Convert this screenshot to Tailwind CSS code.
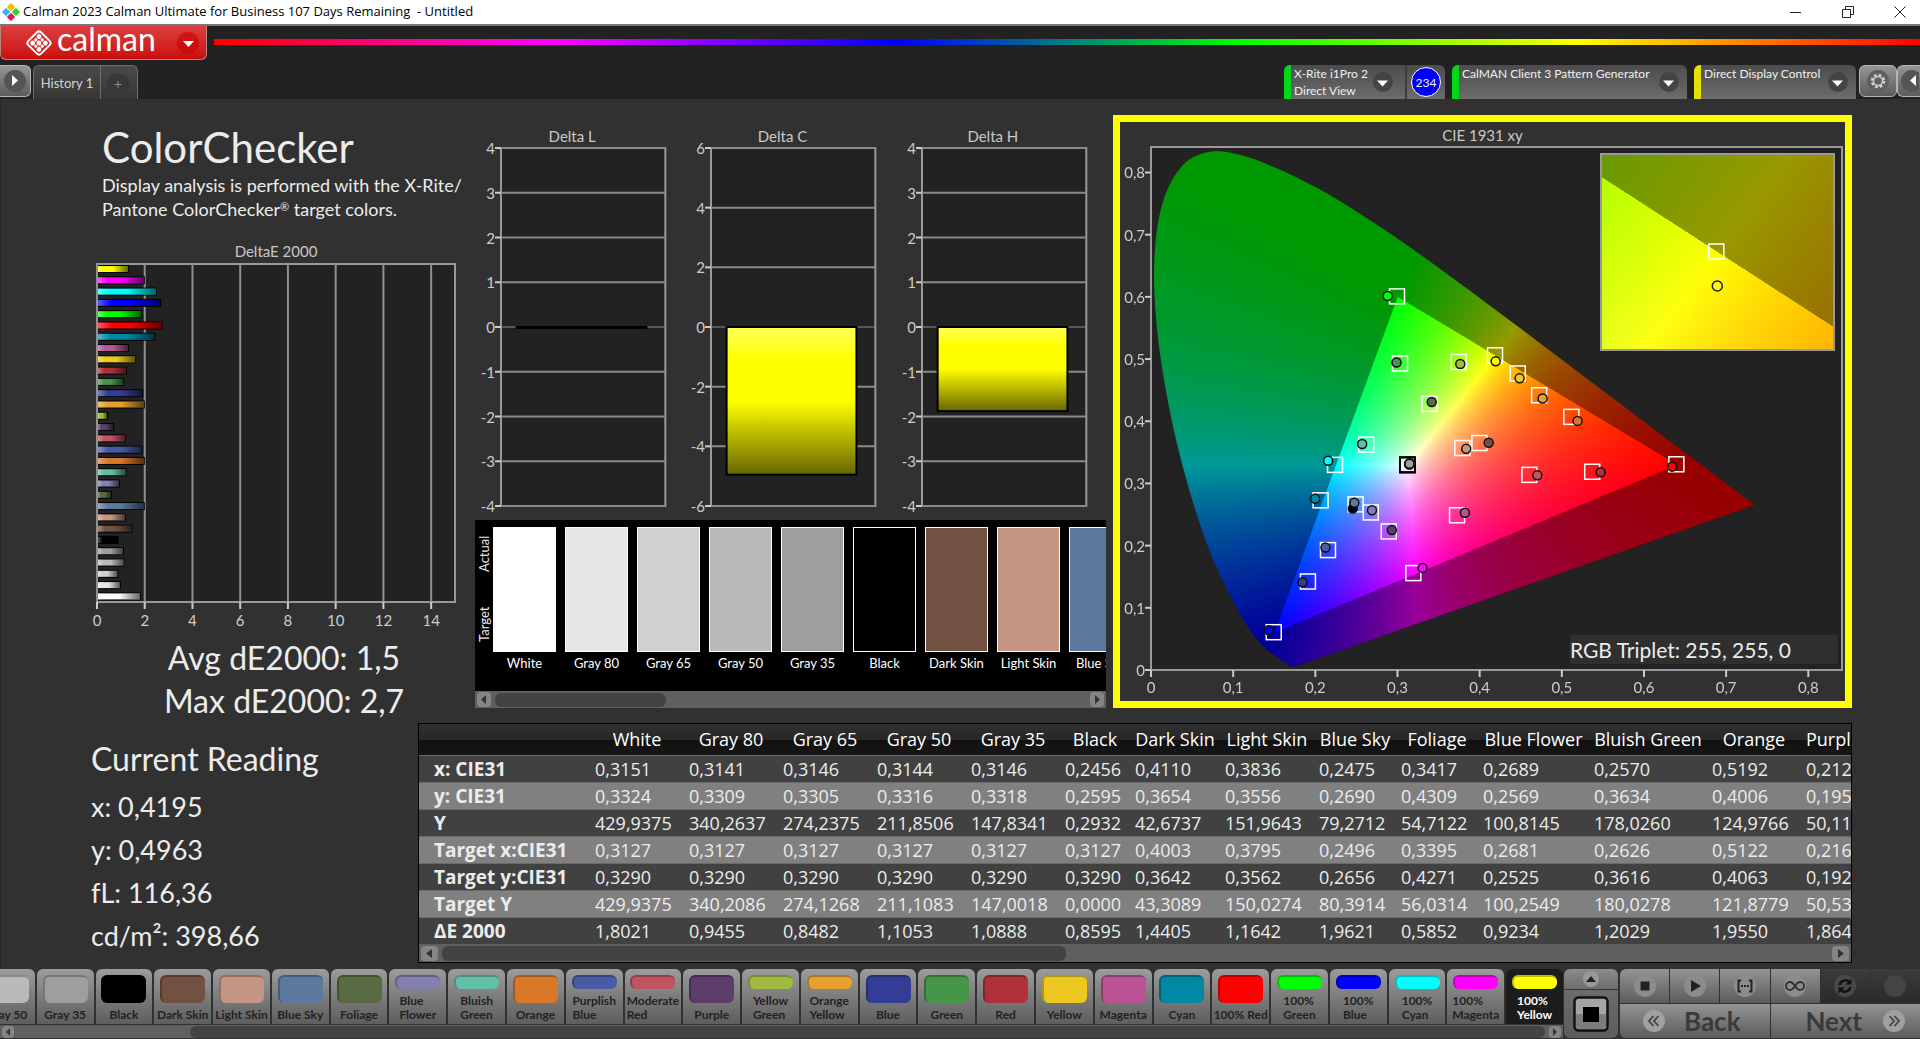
<!DOCTYPE html>
<html lang="en">

<head>
    <meta charset="UTF-8">
    <meta name="viewport" content="width=device-width, initial-scale=1.0">
    <title>Calman 2023</title>
    <script src="https://cdn.jsdelivr.net/npm/@tailwindcss/browser@4"></script>
</head>

<body class="flex min-h-screen flex-col overflow-hidden bg-[#222222] font-['Lato',sans-serif] text-[#ececec]">

    <!-- Title bar -->
    <header class="flex h-[26px] items-center border-b-2 border-[#777777] bg-white px-[2px] text-black">
        <svg class="h-[18px] w-[18px]" viewBox="0 0 18 18">
            <g transform="rotate(45 9 9)">
                <rect x="2.5" y="2.5" width="6" height="6" rx="1" fill="#f2c200" />
                <rect x="9.5" y="2.5" width="6" height="6" rx="1" fill="#2fd62f" />
                <rect x="2.5" y="9.5" width="6" height="6" rx="1" fill="#35b6ef" />
                <rect x="9.5" y="9.5" width="6" height="6" rx="1" fill="#e3194d" />
            </g>
        </svg>
        <h1 class="ml-[3px] flex-1 font-['Open_Sans',sans-serif] text-[13px] whitespace-pre">Calman 2023 Calman Ultimate for Business 107 Days Remaining  - Untitled</h1>
        <div class="flex gap-10 pr-3">
            <button aria-label="Minimize"><svg class="h-3 w-3" viewBox="0 0 12 12" fill="none" stroke="#222"><path d="M0 6.5h11" /></svg></button>
            <button aria-label="Restore"><svg class="h-3 w-3" viewBox="0 0 12 12" fill="none" stroke="#222"><path d="M.5 3.5h8v8h-8zM3.500 3.500v-3h8v8h-3" /></svg></button>
            <button aria-label="Close"><svg class="h-3 w-3" viewBox="0 0 12 12" fill="none" stroke="#222"><path d="M.5.5l11 11M11.500.5l-11 11" /></svg></button>
        </div>
    </header>

    <!-- Logo and rainbow line -->
    <div class="flex h-[34px] items-start">
        <button class="flex h-[34px] w-[207px] items-center rounded-b-md border border-t-0 border-[#b98585] bg-linear-to-b from-[#dd3c3c] to-[#c90c0c] pr-[6px] pl-6 text-white">
            <svg class="h-7 w-7" viewBox="0 0 28 28">
                <g transform="rotate(45 14 14)">
                    <rect x="5" y="5" width="18" height="18" rx="3" fill="none" stroke="#fff" stroke-width="2" />
                    <g fill="#fff">
                        <circle cx="9.500" cy="9.500" r="2.400" /><circle cx="14" cy="9.500" r="1.600" /><circle cx="18.500" cy="9.500" r="2.400" />
                        <circle cx="9.500" cy="14" r="1.600" /><circle cx="14" cy="14" r="2.400" /><circle cx="18.500" cy="14" r="1.600" />
                        <circle cx="9.500" cy="18.500" r="2.400" /><circle cx="14" cy="18.500" r="1.600" /><circle cx="18.500" cy="18.500" r="2.400" />
                    </g>
                </g>
            </svg>
            <span class="ml-1 flex-1 pb-2 text-left text-[32px] leading-6 font-normal">calman</span>
            <svg class="h-6 w-6" viewBox="0 0 24 24"><circle cx="12" cy="12" r="11" fill="#c00" fill-opacity=".6" /><path d="M7 10h11l-5.500 6z" fill="#fff" /></svg>
        </button>
        <div class="mt-[13px] ml-[7px] h-[6px] flex-1 bg-[linear-gradient(90deg,#f00,#f0f_20%,#00f_40%,#0f0_60%,#ff0_80%,#f00)]"></div>
    </div>

    <!-- History tab and devices -->
    <nav class="flex h-[39px] items-start pt-[5px]">
        <button class="flex h-8 w-[31px] items-center justify-center rounded-r-md border border-l-0 border-[#b4b4b4] bg-linear-to-b from-[#969696] to-[#5c5c5c]" aria-label="Expand">
            <svg class="h-6 w-6" viewBox="0 0 24 24"><circle cx="12" cy="12" r="11" fill="#555" /><path d="M9 6v11l6-5.500z" fill="#fff" /></svg>
        </button>
        <button class="ml-[2px] h-[34px] w-[67px] rounded-tl-md border border-r-0 border-b-0 border-[#6e6e6e] bg-linear-to-b from-[#4a4a4a] to-[#363636] pt-[2px] text-[13px] text-[#d4d4d4]">History 1</button>
        <button class="flex h-[34px] w-[38px] items-center justify-center rounded-tr-md border border-b-0 border-[#6e6e6e] bg-linear-to-b from-[#4a4a4a] to-[#363636]" aria-label="Add history">
            <svg class="h-6 w-6" viewBox="0 0 24 24"><circle cx="11" cy="13" r="11" fill="#383838" /><path d="M11 10v7M7.500 13.500h7" stroke="#8c8c8c" /></svg>
        </button>

        <div class="ml-auto flex gap-[7px] text-[12px] leading-[17px] text-[#f0f0f0]">
            <div class="flex h-[34px] w-[161px] overflow-hidden rounded-t-md bg-linear-to-b from-[#4c4c4c] to-[#6c6c6c]">
                <span class="w-[7px] shrink-0 bg-[#00d818]"></span>
                <button class="flex flex-1 items-center text-left whitespace-nowrap">
                    <span class="ml-[3px] flex-1">X-Rite i1Pro 2<br>Direct View</span>
                    <svg class="mr-[10px] h-6 w-6 shrink-0" viewBox="0 0 24 24"><circle cx="12" cy="12" r="10" fill="#444" /><path d="M6 10.500h11l-5.500 6z" fill="#fff" /></svg>
                </button>
                <span class="flex w-[40px] shrink-0 items-center justify-center border-l-2 border-[#3c3c3c]">
                    <span class="flex h-[30px] w-[30px] items-center justify-center rounded-full border border-white bg-[#0000fa]">234</span>
                </span>
            </div>
            <div class="flex h-[34px] w-[235px] overflow-hidden rounded-t-md bg-linear-to-b from-[#4c4c4c] to-[#6c6c6c]">
                <span class="w-[7px] shrink-0 bg-[#00d818]"></span>
                <button class="flex flex-1 items-center text-left whitespace-nowrap">
                    <span class="ml-[3px] flex-1 self-start">CalMAN Client 3 Pattern Generator</span>
                    <svg class="mr-[6px] h-6 w-6 shrink-0" viewBox="0 0 24 24"><circle cx="12" cy="12" r="10" fill="#444" /><path d="M6 10.500h11l-5.500 6z" fill="#fff" /></svg>
                </button>
            </div>
            <div class="flex h-[34px] w-[162px] overflow-hidden rounded-t-md bg-linear-to-b from-[#4c4c4c] to-[#6c6c6c]">
                <span class="w-[7px] shrink-0 bg-[#e6e000]"></span>
                <button class="flex flex-1 items-center text-left whitespace-nowrap">
                    <span class="ml-[3px] flex-1 self-start">Direct Display Control</span>
                    <svg class="mr-[6px] h-6 w-6 shrink-0" viewBox="0 0 24 24"><circle cx="12" cy="12" r="10" fill="#444" /><path d="M6 10.500h11l-5.500 6z" fill="#fff" /></svg>
                </button>
            </div>
        </div>
        <button class="ml-[3px] flex h-8 w-[38px] items-center justify-center rounded-md border border-[#b4b4b4] bg-linear-to-b from-[#969696] to-[#5c5c5c]" aria-label="Settings">
            <svg class="h-6 w-6" viewBox="0 0 24 24">
                <circle cx="12" cy="12" r="11" fill="#606060" />
                <circle cx="12" cy="12" r="6" fill="none" stroke="#d0d0d0" stroke-width="2.500" stroke-dasharray="2.700 2.012" />
                <circle cx="12" cy="12" r="4.500" fill="none" stroke="#d0d0d0" stroke-width="1.500" />
            </svg>
        </button>
        <button class="flex h-8 w-[23px] items-center justify-center rounded-l-md border border-r-0 border-[#b4b4b4] bg-linear-to-b from-[#969696] to-[#5c5c5c]" aria-label="Collapse">
            <svg class="h-6 w-5" viewBox="0 0 20 24"><circle cx="13" cy="12" r="11" fill="#555" /><path d="M17 6v11l-6-5.500z" fill="#fff" /></svg>
        </button>
    </nav>

    <main class="flex flex-1 flex-col border-l border-[#262626] bg-[#313131]">
        <section class="grid grid-cols-[minmax(0,474fr)_minmax(0,631fr)_minmax(0,746fr)] pr-[68px]">

            <!-- DeltaE 2000 -->
            <div class="pr-[20px] pl-[96px]">
                <h2 class="mt-[22px] ml-[5px] text-[42px] leading-[52px]">ColorChecker</h2>
                <p class="ml-[5px] text-[18px] leading-[24px] whitespace-nowrap">Display analysis is performed with the X-Rite/<br>Pantone ColorChecker<sup class="text-[11px]">®</sup> target colors.</p>
                <h3 class="mt-[17px] text-center text-[15px] leading-[26px] text-[#c8c8c8]">DeltaE 2000</h3>
                <svg id="deltaE" class="h-[338px] w-full overflow-visible"></svg>
                <p class="mt-[34px] pl-4 text-center text-[32px] leading-[43px]">Avg dE2000: 1,5<br>Max dE2000: 2,7</p>
            </div>

            <!-- Delta charts and swatches -->
            <div class="pt-[25px]">
                <div class="grid grid-cols-3">
                    <div>
                        <h3 class="pr-4 text-center text-[15px] leading-6 text-[#c8c8c8]">Delta L</h3>
                        <div class="pr-[20px] pl-[26px]"><svg id="deltaL" class="h-[358px] w-full overflow-visible"></svg></div>
                    </div>
                    <div>
                        <h3 class="pr-4 text-center text-[15px] leading-6 text-[#c8c8c8]">Delta C</h3>
                        <div class="pr-[20px] pl-[26px]"><svg id="deltaC" class="h-[358px] w-full overflow-visible"></svg></div>
                    </div>
                    <div>
                        <h3 class="pr-4 text-center text-[15px] leading-6 text-[#c8c8c8]">Delta H</h3>
                        <div class="pr-[20px] pl-[26px]"><svg id="deltaH" class="h-[358px] w-full overflow-visible"></svg></div>
                    </div>
                </div>
                <div class="mt-[14px] bg-black">
                    <div class="flex h-[171px] overflow-hidden pt-[7px]">
                        <div class="flex h-[125px] w-[18px] shrink-0 rotate-180 justify-between pt-[10px] pr-px pb-[9px] text-[13px] leading-[17px] [writing-mode:vertical-rl]">
                            <span>Target</span><span>Actual</span>
                        </div>
                        <div id="swatches" class="flex gap-[9px]"></div>
                    </div>
                    <div class="flex h-[17px] items-center gap-1 bg-[#606060] px-[2px]">
                        <button class="h-[15px] w-[14px] rounded-sm bg-[#858585]" aria-label="Scroll left"><svg viewBox="0 0 14 15"><path d="M9 3v9L4 7.500z" fill="#333" /></svg></button>
                        <div class="flex-1"><div class="h-[14px] w-[29%] rounded-md bg-[#434343]"></div></div>
                        <button class="h-[15px] w-[14px] rounded-sm bg-[#858585]" aria-label="Scroll right"><svg viewBox="0 0 14 15"><path d="M5 3v9l5-4.500z" fill="#333" /></svg></button>
                    </div>
                </div>
            </div>

            <!-- CIE 1931 -->
            <div class="pt-4 pl-[7px]">
                <div class="border-[7px] border-[#ffff00] pr-[3px] pl-[31px]">
                    <h3 class="pt-[2px] pr-[28px] text-center text-[15px] leading-[23px] text-[#c8c8c8]">CIE 1931 xy</h3>
                    <div class="relative mb-[31px] h-[523px] bg-[#222222]">
                        <canvas id="cie" width="1382" height="1046" class="block h-full w-full"></canvas>
                        <svg id="ciePoints" class="absolute inset-0 h-full w-full overflow-visible"></svg>
                        <div class="absolute top-[6px] right-[7px] h-[198px] w-[34%] border-2 border-[#999999]">
                            <canvas id="cieZoom" width="466" height="396" class="block h-full w-full"></canvas>
                            <svg class="absolute inset-0 h-full w-full">
                                <svg x="49.500%" y="50%" class="overflow-visible">
                                    <rect x="-7.500" y="-8" width="15" height="15" fill="none" stroke="#fff" stroke-width="1.500" />
                                    <circle cx="1" cy="34" r="5" fill="#ffff00" stroke="#222" stroke-width="1.500" />
                                </svg>
                            </svg>
                        </div>
                        <div class="absolute right-[4px] bottom-[6px] h-[29px] w-[268px] bg-[#2f2f2f] text-[21px] leading-[29px]">RGB Triplet: 255, 255, 0</div>
                    </div>
                </div>
            </div>
        </section>

        <section class="mt-px flex pr-[68px] pl-[90px]">
            <!-- Current reading -->
            <div class="w-[327px] shrink-0 pt-[14px]">
                <h2 class="text-[32px] leading-[44px]">Current Reading</h2>
                <ul class="pt-1 text-[27px] leading-[43px]">
                    <li>x: 0,4195</li>
                    <li>y: 0,4963</li>
                    <li>fL: 116,36</li>
                    <li>cd/m²: 398,66</li>
                </ul>
            </div>

            <!-- Measurements -->
            <div class="min-w-0 flex-1 self-start border border-black font-['Open_Sans',sans-serif]">
                <div class="overflow-hidden">
                    <table class="w-[1480px] table-fixed text-left text-[18px] leading-[26px] whitespace-nowrap">
                        <thead class="bg-[linear-gradient(#303030,#272727_50%,#111_51%,#161616)]">
                            <tr id="head" class="h-[31px] text-white"></tr>
                        </thead>
                        <tbody id="rows"></tbody>
                    </table>
                </div>
                <div class="flex h-[18px] items-center gap-1 bg-[#606060] px-[2px]">
                    <button class="h-[15px] w-[17px] rounded-sm bg-[#858585]" aria-label="Scroll left"><svg viewBox="0 0 17 15"><path d="M11 3v9L5 7.500z" fill="#333" /></svg></button>
                    <div class="flex-1"><div class="h-[15px] w-[45%] rounded-md bg-[#434343]"></div></div>
                    <button class="h-[15px] w-[17px] rounded-sm bg-[#858585]" aria-label="Scroll right"><svg viewBox="0 0 17 15"><path d="M6 3v9l6-4.500z" fill="#333" /></svg></button>
                </div>
            </div>
        </section>
    </main>

    <!-- Patches and transport -->
    <footer class="flex h-[72px] gap-px overflow-hidden bg-[#313131] pt-[2px] pb-px">
        <div class="min-w-0 flex-1 overflow-hidden">
            <div id="patches" class="-ml-[22px] grid h-[55px] grid-cols-[repeat(27,minmax(0,1fr))] gap-[2px]"></div>
            <div class="mt-px flex h-[13px] items-center bg-[#606060] px-[2px]">
                <button class="h-[12px] w-[12px] rounded-sm bg-[#858585]" aria-label="Scroll left"><svg viewBox="0 0 12 12"><path d="M8 2v8L4 6z" fill="#333" /></svg></button>
                <div class="flex flex-1 justify-end pr-[4px]"><div class="h-[12px] w-[88.500%] rounded-md bg-[#434343]"></div></div>
                <button class="h-[12px] w-[12px] rounded-sm bg-[#858585]" aria-label="Scroll right"><svg viewBox="0 0 12 12"><path d="M4 2v8l4-4z" fill="#333" /></svg></button>
            </div>
        </div>
        <div class="flex w-[54px] flex-col">
            <button class="flex h-[21px] items-center justify-center rounded-t-md border-b border-[#333] bg-linear-to-b from-[#8c8c8c] to-[#6c6c6c]" aria-label="Previous patch">
                <svg class="h-4 w-4" viewBox="0 0 16 16"><circle cx="8" cy="8" r="8" fill="#999" /><path d="M3 11h10L8 5z" fill="#222" /></svg>
            </button>
            <button class="flex flex-1 items-center justify-center rounded-b-md bg-linear-to-b from-[#6c6c6c] to-[#5c5c5c]" aria-label="Patch window">
                <svg class="h-9 w-9" viewBox="0 0 36 36"><rect x="1.500" y="1.500" width="33" height="33" rx="4" fill="#a5a5a5" stroke="#111" stroke-width="2.500" /><path d="M3 18h30v12a3 3 0 0 1-3 3H6a3 3 0 0 1-3-3z" fill="#7d7d7d" /><rect x="10" y="11" width="16" height="15" fill="#000" /></svg>
            </button>
        </div>
        <div class="flex w-[301px] flex-col gap-px pl-px">
            <div class="grid h-[34px] grid-cols-6 gap-px">
                <button class="flex items-center justify-center rounded-tl-md bg-linear-to-b from-[#949494] to-[#5c5c5c]" aria-label="Stop"><svg class="h-6 w-6" viewBox="0 0 24 24"><circle cx="12" cy="12" r="11" fill="#8c8c8c" /><path d="M7.500 7.500h9v9h-9z" fill="#222" /></svg></button>
                <button class="flex items-center justify-center bg-linear-to-b from-[#949494] to-[#5c5c5c]" aria-label="Play"><svg class="h-6 w-6" viewBox="0 0 24 24"><circle cx="12" cy="12" r="11" fill="#8c8c8c" /><path d="M8 6v12l10-6z" fill="#222" /></svg></button>
                <button class="flex items-center justify-center bg-linear-to-b from-[#949494] to-[#5c5c5c]" aria-label="Read series"><svg class="h-6 w-6" viewBox="0 0 24 24"><circle cx="12" cy="12" r="11" fill="#8c8c8c" /><path d="M8 6.500H5.500v11H8M16 6.500h2.500v11H16M8 12h2m1 0h2m1 0h2" fill="none" stroke="#222" stroke-width="2" /></svg></button>
                <button class="flex items-center justify-center bg-linear-to-b from-[#949494] to-[#5c5c5c]" aria-label="Continuous"><svg class="h-6 w-6" viewBox="0 0 24 24"><circle cx="12" cy="12" r="11" fill="#8c8c8c" /><path d="M12 12c-2-3-3.500-4-5-4a4 4 0 0 0 0 8c1.500 0 3-1 5-4s3.500-4 5-4a4 4 0 0 1 0 8c-1.500 0-3-1-5-4z" fill="none" stroke="#333" stroke-width="2" /></svg></button>
                <button class="flex items-center justify-center bg-linear-to-b from-[#3c3c3c] to-[#2a2a2a]" aria-label="Refresh"><svg class="h-6 w-6" viewBox="0 0 24 24"><circle cx="12" cy="12" r="11" fill="#484848" /><path d="M6.500 11a6 6 0 0 1 10-3M17.500 13a6 6 0 0 1-10 3" fill="none" stroke="#111" stroke-width="2.500" /><path d="M18.500 4.500v6h-6zM5.500 19.500v-6h6z" fill="#111" /></svg></button>
                <button class="flex items-center justify-center bg-linear-to-b from-[#3c3c3c] to-[#2a2a2a]" aria-label="Record"><svg class="h-6 w-6" viewBox="0 0 24 24"><circle cx="12" cy="12" r="11" fill="#444" /></svg></button>
            </div>
            <div class="grid flex-1 grid-cols-2 gap-px text-[26px] leading-none font-bold text-[#3a3a3a]">
                <button class="flex items-center rounded-bl-md bg-linear-to-b from-[#949494] to-[#5c5c5c] pl-[22px]">
                    <svg class="mr-[18px] h-6 w-6" viewBox="0 0 24 24"><circle cx="12" cy="12" r="11" fill="#a0a0a0" /><path d="M11.500 7l-4.500 5 4.500 5M16.500 7l-4.500 5 4.500 5" fill="none" stroke="#444" stroke-width="1.800" /></svg>Back
                </button>
                <button class="flex items-center justify-end bg-linear-to-b from-[#949494] to-[#5c5c5c] pr-[14px]">
                    Next<svg class="ml-[20px] h-6 w-6" viewBox="0 0 24 24"><circle cx="12" cy="12" r="11" fill="#a0a0a0" /><path d="M7.500 7l4.500 5-4.500 5M12.500 7l4.500 5-4.500 5" fill="none" stroke="#444" stroke-width="1.800" /></svg>
                </button>
            </div>
        </div>
    </footer>

    <script>
        // name, color, deltaE, target x/y, measured x/y
        const patches = [
            ["White", "#ffffff", 1.80, .3127, .3290, .3151, .3324],
            ["Gray 80", "#e6e6e6", .95, .3127, .3290, .3141, .3309],
            ["Gray 65", "#d0d0d0", .85, .3127, .3290, .3146, .3305],
            ["Gray 50", "#bababa", 1.11, .3127, .3290, .3144, .3316],
            ["Gray 35", "#9e9e9e", 1.09, .3127, .3290, .3146, .3318],
            ["Black", "#000000", .86, .3127, .3290, .2456, .2595],
            ["Dark Skin", "#735142", 1.44, .4003, .3642, .4110, .3654],
            ["Light Skin", "#c49582", 1.16, .3795, .3562, .3836, .3556],
            ["Blue Sky", "#5c7a9e", 1.96, .2496, .2656, .2475, .2690],
            ["Foliage", "#596b42", .59, .3395, .4271, .3417, .4309],
            ["Blue Flower", "#8280b0", .92, .2681, .2525, .2689, .2569],
            ["Bluish Green", "#64bfa9", 1.20, .2626, .3616, .2570, .3634],
            ["Orange", "#d97829", 1.96, .5122, .4063, .5192, .4006],
            ["Purplish Blue", "#4a5ba5", 1.86, .216, .192, .2123, .1968],
            ["Moderate Red", "#c25462", 1.16, .4612, .313, .4702, .313],
            ["Purple", "#5d3d6c", .68, .290, .222, .2931, .225],
            ["Yellow Green", "#a0bc40", .42, .3751, .4945, .3764, .492],
            ["Orange Yellow", "#e6a12e", 1.96, .473, .441, .4766, .4366],
            ["Blue", "#343d96", 1.89, .1916, .1415, .1843, .141],
            ["Green", "#479549", 1.10, .3037, .492, .2988, .4945],
            ["Red", "#b03038", 1.22, .5376, .318, .5473, .318],
            ["Yellow", "#edc722", 1.60, .447, .476, .4486, .469],
            ["Magenta", "#bc5394", 1.29, .3731, .248, .382, .2528],
            ["Cyan", "#0088a5", 2.40, .207, .272, .1998, .2755],
            ["100% Red", "#ff0000", 2.70, .64, .33, .6342, .327],
            ["100% Green", "#00ff00", 1.85, .30, .60, .288, .6015],
            ["100% Blue", "#0000ff", 2.65, .15, .06, .1433, .064],
            ["100% Cyan", "#00ffff", 2.46, .2246, .329, .2156, .3364],
            ["100% Magenta", "#ff00ff", 1.96, .3199, .155, .3305, .1642],
            ["100% Yellow", "#ffff00", 1.29, .4193, .5053, .4195, .4963]
        ];

        // Lit-cylinder shading laid over every bar
        function shade(id, vertical) {
            return `<defs><linearGradient id="${id}" x2="${vertical ? 0 : 1}" y2="${vertical ? 1 : 0}">
                <stop offset="0" stop-color="#fff" stop-opacity=".35" /><stop offset=".22" stop-color="#fff" stop-opacity="0" />
                <stop offset=".5" stop-color="#000" stop-opacity="0" /><stop offset="1" stop-color="#000" stop-opacity=".6" />
            </linearGradient></defs>`;
        }

        function drawDeltaE() {
            let out = shade("shadeE", false) + `<rect width="100%" height="100%" fill="#222222" stroke="#999" stroke-width="2" />`;
            for (let v = 0; v <= 14; v += 2) {
                const x = v / 15 * 100;
                out += `<line x1="${x}%" x2="${x}%" y2="100%" stroke="#909090" stroke-width="2" />
                    <svg x="${x}%" y="100%" class="overflow-visible"><path d="M0 0v7" stroke="#ccc" stroke-width="2" />
                    <text y="24" text-anchor="middle" class="fill-[#cccccc] text-[15px]">${v}</text></svg>`;
            }
            [...patches].reverse().forEach(([name, color, dE], i) => {
                const y = .3 + i * 3.34, w = dE / 15 * 100;
                out += `<rect x="1" y="${y}%" width="${w}%" height="8" fill="#000" />
                    <rect x="1" y="${y + .3}%" width="${w - .3}%" height="6" fill="${color}" />
                    <rect x="1" y="${y + .3}%" width="${w - .3}%" height="6" fill="url(#shadeE)" />`;
            });
            document.getElementById("deltaE").innerHTML = out;
        }

        function drawDelta(id, max, step, value) {
            const at = v => (max - v) / (2 * max) * 100;
            let out = shade(id + "Shade", true) + `<rect width="100%" height="100%" fill="#222222" stroke="#999" stroke-width="2" />`;
            for (let v = max; v >= -max; v -= step) {
                out += `<line x2="100%" y1="${at(v)}%" y2="${at(v)}%" stroke="#8a8a8a" stroke-width="${v ? 2 : 1}" />
                    <svg y="${at(v)}%" class="overflow-visible"><path d="M-6 0h6" stroke="#ccc" stroke-width="2" />
                    <text x="-6" y="6" text-anchor="end" class="fill-[#cccccc] text-[15px]">${v}</text></svg>`;
            }
            const h = at(value) - 50;
            out += `<rect x="9.5%" y="50%" width="79%" height="${h}%" fill="#ffff00" />
                <rect x="9.5%" y="50%" width="79%" height="${h}%" fill="url(#${id}Shade)" stroke="#000" stroke-width="2" />`;
            document.getElementById(id).innerHTML = out;
        }

        const locus = [[.1741, .005], [.1714, .0051], [.1644, .0109], [.1566, .0177], [.144, .0297], [.1355, .0399], [.1241, .0578],
            [.1096, .0868], [.0913, .1327], [.0687, .2007], [.0454, .295], [.0235, .4127], [.0082, .5384], [.0039, .6548],
            [.0139, .7502], [.0389, .812], [.0743, .8338], [.1142, .8262], [.1547, .8059], [.1929, .7816], [.2296, .7543],
            [.3016, .6923], [.3731, .6245], [.4441, .5547], [.5125, .4866], [.5752, .4242], [.627, .3725], [.6658, .334],
            [.6915, .3083], [.719, .2809], [.7347, .2653]];

        // Paint chromaticities; anything outside Rec.709 is dimmed
        function paint(id, x0, y0, x1, y1, masked) {
            const canvas = document.getElementById(id);
            const ctx = canvas.getContext("2d");
            const w = canvas.width, h = canvas.height;
            const img = ctx.createImageData(w, h);
            for (let j = 0; j < h; j++) {
                for (let i = 0; i < w; i++) {
                    const x = x0 + (x1 - x0) * i / w, y = y1 - (y1 - y0) * (j + .5) / h, z = 1 - x - y;
                    const rgb = [3.2406 * x - 1.5372 * y - .4986 * z, -.9689 * x + 1.8758 * y + .0415 * z, .0557 * x - .204 * y + 1.057 * z];
                    const level = Math.min(...rgb) < 0 ? 153 : 255;
                    const top = Math.max(...rgb), k = (j * w + i) * 4;
                    for (let c = 0; c < 3; c++) img.data[k + c] = Math.max(0, rgb[c]) / top * level;
                    img.data[k + 3] = 255;
                }
            }
            ctx.putImageData(img, 0, 0);
            if (!masked) return;

            // Keep only the inside of the spectral locus, smoothed through its points
            const p = locus.map(([x, y]) => [x / x1 * w, (1 - y / y1) * h]);
            ctx.globalCompositeOperation = "destination-in";
            ctx.beginPath();
            ctx.moveTo(...p[0]);
            for (let i = 0; i < p.length - 1; i++) {
                const a = p[Math.max(0, i - 1)], b = p[i], c = p[i + 1], d = p[Math.min(p.length - 1, i + 2)];
                ctx.bezierCurveTo(b[0] + (c[0] - a[0]) / 6, b[1] + (c[1] - a[1]) / 6, c[0] - (d[0] - b[0]) / 6, c[1] - (d[1] - b[1]) / 6, ...c);
            }
            ctx.fill();
        }

        function drawCie() {
            const max = .841;
            const px = x => x / max * 100 + "%", py = y => (1 - y / max) * 100 + "%";
            let out = `<rect width="100%" height="100%" fill="none" stroke="#999" stroke-width="2" />`;
            for (let i = 0; i <= 8; i++) {
                const label = i ? "0," + i : "0";
                out += `<svg x="${px(i / 10)}" y="100%" class="overflow-visible"><path d="M0 0v7" stroke="#ccc" stroke-width="2" />
                    <text y="23" text-anchor="middle" class="fill-[#cccccc] text-[15px]">${label}</text></svg>
                    <svg y="${py(i / 10)}" class="overflow-visible"><path d="M-6 0h6" stroke="#ccc" stroke-width="2" />
                    <text x="-6" y="6" text-anchor="end" class="fill-[#cccccc] text-[15px]">${label}</text></svg>`;
            }
            patches.forEach(([name, color, dE, tx, ty]) => {
                out += `<svg x="${px(tx)}" y="${py(ty)}" class="overflow-visible"><rect x="-8" y="-8" width="15" height="15"
                    fill="none" stroke="${tx === .3127 ? "#000" : "#fff"}" stroke-width="1.500" /></svg>`;
            });
            // black is lowest so that Blue Sky stays visible over it
            [patches[5], ...patches.filter(p => p[0] !== "Black")].forEach(([name, color, dE, tx, ty, x, y]) => {
                out += `<circle cx="${px(x)}" cy="${py(y)}" r="4.500" fill="${color}" stroke="#111" stroke-width="1.500" />`;
            });
            document.getElementById("ciePoints").innerHTML = out;
        }

        // Column widths and values of the measurement table
        const columns = [
            ["White", 94, "0,3151 0,3324 429,9375 0,3127 0,3290 429,9375 1,8021"],
            ["Gray 80", 94, "0,3141 0,3309 340,2637 0,3127 0,3290 340,2086 0,9455"],
            ["Gray 65", 94, "0,3146 0,3305 274,2375 0,3127 0,3290 274,1268 0,8482"],
            ["Gray 50", 94, "0,3144 0,3316 211,8506 0,3127 0,3290 211,1083 1,1053"],
            ["Gray 35", 94, "0,3146 0,3318 147,8341 0,3127 0,3290 147,0018 1,0888"],
            ["Black", 70, "0,2456 0,2595 0,2932 0,3127 0,3290 0,0000 0,8595"],
            ["Dark Skin", 90, "0,4110 0,3654 42,6737 0,4003 0,3642 43,3089 1,4405"],
            ["Light Skin", 94, "0,3836 0,3556 151,9643 0,3795 0,3562 150,0274 1,1642"],
            ["Blue Sky", 82, "0,2475 0,2690 79,2712 0,2496 0,2656 80,3914 1,9621"],
            ["Foliage", 82, "0,3417 0,4309 54,7122 0,3395 0,4271 56,0314 0,5852"],
            ["Blue Flower", 111, "0,2689 0,2569 100,8145 0,2681 0,2525 100,2549 0,9234"],
            ["Bluish Green", 118, "0,2570 0,3634 178,0260 0,2626 0,3616 180,0278 1,2029"],
            ["Orange", 94, "0,5192 0,4006 124,9766 0,5122 0,4063 121,8779 1,9550"],
            ["Purplish Blue", 93, "0,2123 0,1957 50,1124 0,2162 0,1921 50,5310 1,8642"]
        ];
        const labels = ["x: CIE31", "y: CIE31", "Y", "Target x:CIE31", "Target y:CIE31", "Target Y", "ΔE 2000"];

        document.getElementById("head").innerHTML = `<th style="width:176px"></th>` + columns.map(([name, width], i) =>
            `<th scope="col" style="width:${width}px" class="font-normal ${i < 13 ? "pr-[10px] text-center" : "overflow-hidden"}">${name}</th>`).join("");
        document.getElementById("rows").innerHTML = labels.map((label, r) => `
            <tr class="h-[27px] border-t border-[#6a6a6a] ${r % 2 ? "bg-[#808080]" : "bg-[#414141]"}">
                <th scope="row" class="pl-[15px] text-[19px] font-bold">${label}</th>
                ${columns.map(c => `<td>${c[2].split(" ")[r]}</td>`).join("")}
            </tr>`).join("");

        document.getElementById("swatches").innerHTML = patches.slice(0, 9).map(([name, color]) => `
            <div class="w-[63px] shrink-0 text-center text-[13px] leading-[23px] whitespace-nowrap text-white">
                <div class="h-[125px] border border-white" style="background:${color}"></div>${name}
            </div>`).join("");

        document.getElementById("patches").innerHTML = patches.slice(3).map(([name, color]) => {
            const two = name.includes(" ") && !/Gray|Skin|Sky|100% Red/.test(name);
            const on = name === "100% Yellow";
            return `<button class="flex min-w-0 flex-col items-center rounded-t-md pt-[6px] pb-[2px] text-[12px] leading-[14px] font-bold
                ${on ? "bg-[#1c1c1c] text-white" : "bg-linear-to-b from-[#9c9c9c] to-[#5e5e5e] text-[#222222]"}">
                <span class="w-[45px] shrink-0 rounded-md border-t-2 border-l-2 border-black/25 ${two ? "h-[14px]" : "h-[28px]"}" style="background:${color}"></span>
                <span class="mt-auto text-left whitespace-nowrap">${two ? name.replace(" ", "<br>") : name}</span>
            </button>`;
        }).join("");

        drawDeltaE();
        drawDelta("deltaL", 4, 1, -.02);
        drawDelta("deltaC", 6, 2, -4.95);
        drawDelta("deltaH", 4, 1, -1.88);
        paint("cie", 0, 0, .841, .841, true);
        paint("cieZoom", .3943, .4795, .4443, .5311, false);
        drawCie();
    </script>
</body>

</html>
